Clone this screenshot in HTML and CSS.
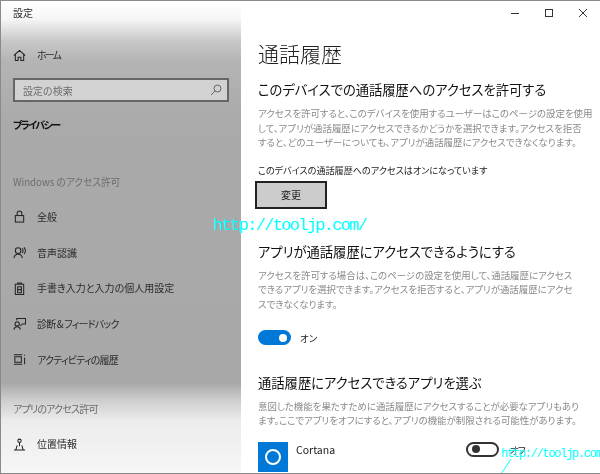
FILE: index.html
```html
<!DOCTYPE html>
<html lang="ja">
<head>
<meta charset="utf-8">
<title>設定</title>
<link rel="stylesheet" href="styles.css">
</head>
<body>
<div class="window">
  <aside class="sidebar">
    <div class="app-title">設定</div>
    <div class="nav-item home">
      <svg class="icon" viewBox="0 0 14 14"><path d="M1 7 7 1.500 13 7M2.500 6v6.500h3V9h3v3.500h3V6"/></svg>
      <span class="kana-tight">ホーム</span>
    </div>
    <div class="search">
      <span>設定の検索</span>
      <svg class="search-icon" viewBox="0 0 12 12"><circle cx="7.500" cy="4.500" r="3.500"/><path d="M5 7 1 11"/></svg>
    </div>
    <div class="current">プライバシー</div>
    <div class="group first">Windows のアクセス許可</div>
    <div class="nav-item">
      <svg class="icon" viewBox="0 0 14 14"><rect x="2.500" y="6" width="9" height="7"/><path d="M4.500 6V3.500a2.500 2.500 0 0 1 5 0V6"/></svg>
      <span>全般</span>
    </div>
    <div class="nav-item">
      <svg class="icon" viewBox="0 0 14 14"><circle cx="5.500" cy="5" r="3"/><path d="M1 13c.5-3 2-4.500 4.500-4.500S9.500 10 10 13M10 2.500c1 1.500 1 3.500 0 5M12 1.500c1.500 2 1.500 5 0 7"/></svg>
      <span>音声認識</span>
    </div>
    <div class="nav-item">
      <svg class="icon" viewBox="0 0 14 14"><path d="M2.500 2.500h9v11h-9zM5 2.500V1h4v1.500M5 5h4v6.500H5zM5 8.200h4"/></svg>
      <span>手書き入力と入力の個人用設定</span>
    </div>
    <div class="nav-item">
      <svg class="icon" viewBox="0 0 14 14"><circle cx="4.500" cy="7.500" r="2.300"/><path d="M1 13.500c.4-2 1.500-3 3.500-3s3 1 3.500 3M4 3.500V1.500h9.500v6H10l-2 2"/></svg>
      <span class="kana">診断 &amp; フィードバック</span>
    </div>
    <div class="nav-item">
      <svg class="icon" viewBox="0 0 14 14"><path d="M1 2h9M1 12h9M2 4h7v6H2zM12.500 2v1M12.500 5v7"/></svg>
      <span class="kana">アクティビティの履歴</span>
    </div>
    <div class="group second kana">アプリのアクセス許可</div>
    <div class="nav-item">
      <svg class="icon" viewBox="0 0 14 14"><circle cx="7" cy="3" r="1.800"/><path d="M7 5v4M4.500 8 3 13h8L9.500 8M1 13h12"/></svg>
      <span>位置情報</span>
    </div>
  </aside>
  <main class="content">
    <div class="titlebar">
      <svg class="tb" viewBox="0 0 10 10"><path d="M1 5.500h8"/></svg>
      <svg class="tb" viewBox="0 0 10 10"><rect x="1.500" y="1.500" width="7" height="7"/></svg>
      <svg class="tb" viewBox="0 0 10 10"><path d="M1 1l8 8M9 1l-8 8"/></svg>
    </div>
    <h1>通話履歴</h1>
    <h2>このデバイスでの通話履歴へのアクセスを許可する</h2>
    <p class="desc">アクセスを許可すると、このデバイスを使用するユーザーはこのページの設定を使用<br>して、アプリが通話履歴にアクセスできるかどうかを選択できます。アクセスを拒否<br>すると、どのユーザーについても、アプリが通話履歴にアクセスできなくなります。</p>
    <div class="status">このデバイスの通話履歴へのアクセスはオンになっています</div>
    <button class="change">変更</button>
    <h2 class="h-apps">アプリが通話履歴にアクセスできるようにする</h2>
    <p class="desc">アクセスを許可する場合は、このページの設定を使用して、通話履歴にアクセス<br>できるアプリを選択できます。アクセスを拒否すると、アプリが通話履歴にアクセ<br>スできなくなります。</p>
    <div class="toggle-row">
      <span class="toggle on"><i></i></span>
      <span class="toggle-label">オン</span>
    </div>
    <h2 class="h-choose">通話履歴にアクセスできるアプリを選ぶ</h2>
    <p class="desc">意図した機能を果たすために通話履歴にアクセスすることが必要なアプリもあり<br>ます。ここでアプリをオフにすると、アプリの機能が制限される可能性があります。</p>
    <div class="app-row">
      <span class="app-tile"><i></i></span>
      <span class="app-name">Cortana</span>
      <span class="toggle off"><i></i></span>
      <span class="toggle-label">オフ</span>
    </div>
  </main>
  <div class="mark mark-a">http://tooljp.com/</div>
  <div class="mark mark-b">http://tooljp.com</div>
  <svg class="mark-line" viewBox="0 0 12 15"><path d="M11 0 1 15"/></svg>
</div>
</body>
</html>
```
FILE: styles.css
```css
* { box-sizing: border-box; }
html, body { margin: 0; padding: 0; }
body {
  font-family: "Noto Sans CJK JP", "Noto Sans", sans-serif;
  font-feature-settings: "palt";
  background: #fff;
}
.window {
  position: relative;
  display: flex;
  width: 600px;
  height: 474px;
  overflow: hidden;
  border: 1px solid #8a8a8a;
  border-right: 0;
  background: #fff;
}
.sidebar {
  width: 240px;
  flex: none;
  padding: 0 0 0 12px;
  color: #2b2b2b;
  font-size: 10px;
  filter: blur(.3px);
  background: linear-gradient(#fff 0, #f6f6f6 18px, #c8c8c8 40px, #b4b4b4 60px, #aaa 120px, #a8a8a8 382px, #cfcfcf 400px, #ececec 420px, #f6f6f6 100%);
}
.app-title { height: 24px; line-height: 24px; }
.icon {
  width: 13px;
  height: 13px;
  flex: none;
  fill: none;
  stroke: #222;
  stroke-width: 1.100;
}
.nav-item {
  display: flex;
  align-items: center;
  gap: 11px;
  height: 35.700px;
  line-height: 16px;
}
.kana { letter-spacing: -.8px; }
.kana-tight { letter-spacing: -1.800px; }
.home { margin-top: 13px; height: 34px; }
.search {
  display: flex;
  align-items: center;
  justify-content: space-between;
  width: 216px;
  height: 24px;
  margin-top: 6px;
  padding: 0 5px 0 8px;
  border: 2px solid #666;
  background: #d2d2d2;
  color: #6e6e6e;
}
.search-icon { width: 12px; height: 12px; fill: none; stroke: #666; stroke-width: 1; }
.current { margin-top: 15px; font-weight: 700; color: #111; line-height: 16px; letter-spacing: -1.600px; }
.group { color: #6c6c6c; line-height: 16px; }
.first { margin-top: 41px; margin-bottom: 9px; font-size: 9.700px; }
.second { margin-top: 24px; margin-bottom: 9px; }
.content {
  flex: 1;
  padding-left: 17px;
  min-width: 0;
  color: #1c1c1c;
  filter: blur(.3px);
}
.titlebar {
  display: flex;
  justify-content: flex-end;
  gap: 24px;
  height: 25px;
  padding: 7px 12px 0 0;
}
.tb { width: 10px; height: 10px; fill: none; stroke: #333; stroke-width: 1; }
h1 { margin: 13px 0 0; font-size: 21px; line-height: 28px; font-weight: 300; color: #222; }
h2 { margin: 12px 0 0; font-size: 13.300px; line-height: 22px; font-weight: 400; color: #111; }
.desc { margin: 5px 0 0; font-size: 9.450px; line-height: 14.600px; color: #8a8a8a; white-space: nowrap; }
.status { margin-top: 13px; font-size: 9.100px; line-height: 14px; color: #222; }
.change {
  display: block;
  width: 72px;
  height: 28px;
  margin: 4px 0 0 -3px;
  padding: 0;
  border: 2px solid #222;
  background: #ccc;
  font: inherit;
  font-size: 10px;
  color: #222;
}
.h-apps { margin-top: 32px; }
.toggle-row { display: flex; align-items: center; gap: 9px; margin-top: 18px; height: 16px; font-size: 9.500px; }
.toggle {
  display: flex;
  align-items: center;
  flex: none;
  width: 33px;
  height: 15px;
  border-radius: 8px;
  padding: 0 4px;
}
.toggle i { display: block; width: 8px; height: 8px; border-radius: 50%; }
.on { background: #0078d7; justify-content: flex-end; }
.on i { background: #fff; }
.off { border: 2px solid #333; }
.off i { background: #333; }
.toggle-label { color: #222; }
.h-choose { margin-top: 26px; }
.app-row { display: flex; align-items: flex-start; margin-top: 14px; font-size: 10.500px; }
.app-row .toggle-label { font-size: 9.500px; letter-spacing: -1px; line-height: 16px; }
.app-tile {
  display: flex;
  align-items: center;
  justify-content: center;
  width: 30px;
  height: 30px;
  flex: none;
  background: #0078d7;
}
.app-tile i { display: block; width: 16px; height: 16px; border: 2px solid #fff; border-radius: 50%; }
.app-name { width: 178px; padding-left: 8px; line-height: 16px; color: #222; }
.app-row .toggle { margin-right: 11px; }
.mark { position: absolute; font-family: "Liberation Mono", monospace; color: #0ff; white-space: nowrap; }
.mark-a { left: 212px; top: 213px; font-size: 17px; line-height: 24px; letter-spacing: -1.700px; }
.mark-b { left: 500px; top: 445px; font-size: 12px; line-height: 16px; letter-spacing: -1.300px; }
.mark-line { position: absolute; left: 499px; top: 458px; width: 12px; height: 15px; fill: none; stroke: #0ff; }
```
